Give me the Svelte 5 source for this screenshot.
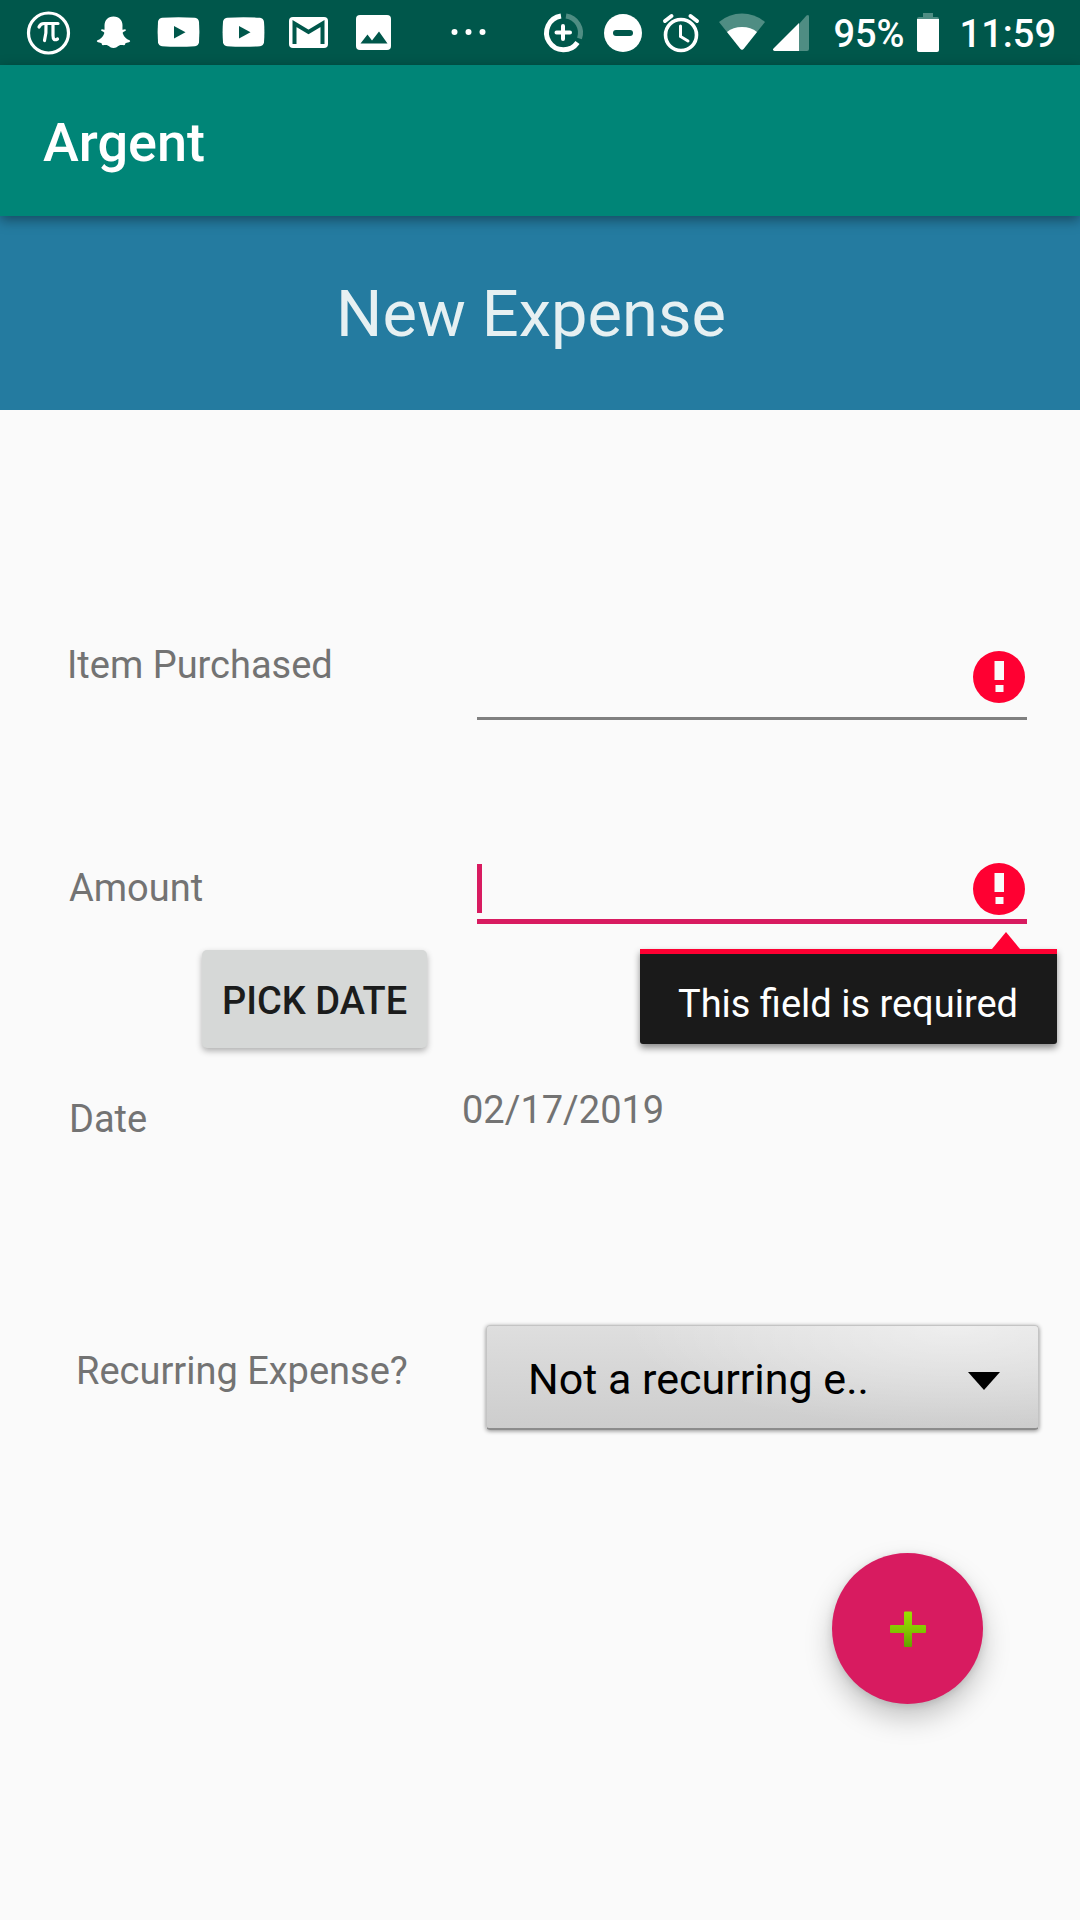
<script>
  let item = $state('');
  let amount = $state('');
  let recurring = $state('none');
</script>

{#snippet errorIcon()}
  <svg class="error-icon" viewBox="0 0 52 52" aria-hidden="true">
    <circle cx="26" cy="26" r="26" fill="#ff0032" />
    <path d="M21.500 10h9.500v19h-9.500zM22.500 34h8v7h-8z" fill="#fafafa" />
  </svg>
{/snippet}

{#snippet youtube()}
  <svg class="slot" viewBox="0 0 65 65" aria-hidden="true">
    <path fill="#fff" d="M16 17.800q16.500-1 33 0 3.500.5 4 4 .8 10.500 0 20.500-.5 3.500-4 4-16.500 1-33 0-3.500-.5-4-4-.8-10 0-20.500.5-3.500 4-4z" />
    <path fill="#00574b" d="M28 26v12.500l11.500-6.300z" />
  </svg>
{/snippet}

<div class="screen">
  <div class="status">
    <div class="notifications">
      <svg class="slot" viewBox="0 0 65 65" aria-hidden="true">
        <circle cx="32.500" cy="33" r="20" fill="none" stroke="#fff" stroke-width="3.200" />
        <path d="M23 27q1.500-3.500 5-3.500h14M30 24.500q.5 9-1.500 16M37 24.500v11q0 6 4.500 3.500" fill="none" stroke="#fff" stroke-width="3.200" stroke-linecap="round" />
      </svg>
      <svg class="slot" viewBox="0 0 65 65" aria-hidden="true">
        <path fill="#fff" d="M32.500 16.500c6 0 9 4 9 9 0 1.500-.1 3 0 4.200 1 .2 2-.6 3-.3.8.5.2 1.500-.8 1.900-1.500.7-2.400 1-1.800 2.500 1.200 3 3.500 5.500 6.600 6.500 1.200.5.700 1.400-.5 1.900-1.500.6-3 .5-3.500 1-.5.700-.2 2-1.500 2-1.500 0-3-.5-4.800.3-1.800 1-3.200 2.600-5.700 2.600s-3.900-1.600-5.700-2.600c-1.800-.8-3.300-.3-4.800-.3-1.300 0-1-1.300-1.500-2-.5-.5-2-.4-3.500-1-1.200-.5-1.700-1.400-.5-1.900 3.100-1 5.400-3.500 6.600-6.500.6-1.500-.3-1.800-1.800-2.500-1-.4-1.600-1.400-.8-1.900 1-.3 2 .5 3 .3.1-1.200 0-2.700 0-4.200 0-5 3-9 9-9z" />
      </svg>
      {@render youtube()}
      {@render youtube()}
      <svg class="slot" viewBox="0 0 65 65" aria-hidden="true">
        <rect x="13" y="17" width="39" height="31" rx="4" fill="#fff" />
        <path d="M18.500 44V23.500L32.500 32l14-8.500V44" fill="none" stroke="#00574b" stroke-width="4" />
      </svg>
      <svg class="slot" viewBox="0 0 65 65" aria-hidden="true">
        <rect x="15" y="15" width="35" height="35" rx="4" fill="#fff" />
        <path fill="#00574b" d="M19.500 43.500l7-9 4.500 6 7-9 8.500 12z" />
      </svg>
      <svg class="slot more" viewBox="0 0 65 65" aria-hidden="true">
        <g fill="#fff"><circle cx="18.500" cy="32" r="3" /><circle cx="32.500" cy="32" r="3" /><circle cx="46.500" cy="32" r="3" /></g>
      </svg>
    </div>
    <div class="system">
      <svg class="sys" viewBox="0 0 60 65" aria-hidden="true">
        <path d="M28 16A17 17 0 1 0 44.500 42.500" fill="none" stroke="#fff" stroke-width="5" />
        <path d="M33 16A17 17 0 0 1 46.500 38.500" fill="none" stroke="#4f8d83" stroke-width="5" />
        <path d="M23.500 32.500h13.500M30 26v13" stroke="#fff" stroke-width="4" stroke-linecap="round" />
      </svg>
      <svg class="sys" viewBox="0 0 60 65" aria-hidden="true">
        <circle cx="30" cy="33" r="19" fill="#fff" />
        <rect x="20" y="30" width="20" height="6" rx="3" fill="#00574b" />
      </svg>
      <svg class="sys" viewBox="0 0 60 65" aria-hidden="true">
        <circle cx="28" cy="35" r="15.500" fill="none" stroke="#fff" stroke-width="3.600" />
        <path d="M12 21l6.500-5M44 21l-6.500-5" stroke="#fff" stroke-width="4" stroke-linecap="round" />
        <path d="M27.500 26v10.500l7.500 4.500" fill="none" stroke="#fff" stroke-width="3" stroke-linecap="round" />
      </svg>
      <svg class="sys" viewBox="0 0 60 65" aria-hidden="true">
        <path d="M6 22Q16 13.500 29 13.500T52 22L30.500 49q-1.500 1.500-3 0z" fill="#4f8d83" />
        <path d="M14 32Q20 27 29 27t15 5L30.500 49q-1.500 1.500-3 0z" fill="#fff" />
      </svg>
      <svg class="sys" viewBox="0 0 60 65" aria-hidden="true">
        <path d="M26 24l7.500-8.500q2.500-1.500 2.500 1V49q0 2-2 2h-8z" fill="#4f8d83" />
        <path d="M26 23v28H1.500q-2.500-.8-1-2.500z" fill="#fff" />
      </svg>
      <span>95%</span>
      <svg class="battery" viewBox="0 0 22 65" aria-hidden="true">
        <path d="M6 13h10v4h4q2 0 2 2H0q0-2 2-2h4z" fill="#4f8d83" />
        <path d="M0 19h22v31q0 2-2 2H2q-2 0-2-2z" fill="#fff" />
      </svg>
      <span>11:59</span>
    </div>
  </div>

  <header class="app-bar">Argent</header>

  <main>
    <h1>New Expense</h1>

    <form onsubmit={(e) => e.preventDefault()}>
      <div class="row item">
        <label for="item">Item Purchased</label>
        <div class="field">
          <input id="item" type="text" bind:value={item} aria-invalid="true" />
          {@render errorIcon()}
        </div>
      </div>

      <div class="row amount">
        <label for="amount">Amount</label>
        <div class="field active">
          <input id="amount" type="text" inputmode="decimal" bind:value={amount} aria-invalid="true" aria-describedby="amount-error" />
          <span class="caret"></span>
          {@render errorIcon()}
          <div class="tooltip" id="amount-error" role="alert">This field is required</div>
        </div>
      </div>

      <button class="pick" type="button">PICK DATE</button>

      <div class="row date">
        <label for="date">Date</label>
        <output id="date">02/17/2019</output>
      </div>

      <div class="row recurring">
        <label for="recurring">Recurring Expense?</label>
        <div class="spinner">
          <select id="recurring" bind:value={recurring}>
            <option value="none">Not a recurring e..</option>
          </select>
          <svg class="arrow" viewBox="0 0 32 18" aria-hidden="true"><path d="M0 0h32L16 18z" /></svg>
        </div>
      </div>

      <button class="fab" type="submit" aria-label="Add expense">
        <svg viewBox="0 0 36 36" aria-hidden="true">
          <defs>
            <linearGradient id="leaf" x1="0" y1="0" x2="0" y2="1">
              <stop offset="0" stop-color="#98e000" />
              <stop offset=".5" stop-color="#84c800" />
              <stop offset="1" stop-color="#64a000" />
            </linearGradient>
          </defs>
          <path d="M15 .5h6q1 0 1 1V14h13q1 0 1 1v6q0 1-1 1H22v13q0 1-1 1h-6q-1 0-1-1V22H1q-1 0-1-1v-6q0-1 1-1h13V1.500q0-1 1-1z" fill="url(#leaf)" />
        </svg>
      </button>
    </form>
  </main>
</div>

<style>
  :global(body) {
    margin: 0;
    background: #fafafa;
  }

  .screen {
    min-height: 100vh;
    background: #fafafa;
    color: #737373;
    font: 400 38px/44px Roboto, sans-serif;
  }

  .status {
    display: flex;
    justify-content: space-between;
    height: 65px;
    padding: 0 24px 0 16px;
    background: #00574b;
    color: #fff;
    font-weight: 500;
    line-height: 68px;
  }

  .notifications,
  .system {
    display: flex;
  }

  .slot {
    width: 65px;
    height: 65px;
  }

  .more {
    margin-left: 30px;
  }

  .sys {
    width: 60px;
    height: 65px;
  }

  .battery {
    width: 22px;
    height: 65px;
    margin: 0 21px 0 12px;
  }

  .app-bar {
    position: relative;
    padding: 46px 43px 41px;
    background: #008577;
    box-shadow: 0 4px 12px rgba(0, 0, 0, 0.4);
    color: #fff;
    font-weight: 500;
    font-size: 54px;
    line-height: 64px;
  }

  h1 {
    margin: 0;
    padding: 60px 18px 58px 0;
    background: #247ba0;
    color: #e6f0f2;
    font-weight: 400;
    font-size: 65px;
    line-height: 76px;
    text-align: center;
  }

  form {
    display: flex;
    flex-direction: column;
    padding: 233px 0 96px;
  }

  .row {
    display: grid;
    grid-template-columns: 410px 1fr;
    padding: 0 53px 0 67px;
  }

  .row.amount {
    align-items: center;
    margin-top: 132px;
    padding-left: 69px;
    grid-template-columns: 408px 1fr;
  }

  .row.date {
    align-items: start;
    margin-top: 40px;
    padding-left: 69px;
    grid-template-columns: 393px 1fr;
  }

  .row.date label {
    padding-top: 9px;
  }

  .row.recurring {
    align-items: start;
    margin-top: 184px;
    padding: 0 41px 0 76px;
    grid-template-columns: 410px 1fr;
  }

  .row.recurring label {
    padding-top: 24px;
  }

  .field {
    position: relative;
    display: flex;
  }

  input {
    box-sizing: border-box;
    width: 100%;
    height: 77px;
    padding: 0 60px 0 0;
    border: 0;
    border-bottom: 3px solid #808080;
    outline: 0;
    background: none;
    color: #1a1a1a;
    font: inherit;
    font-size: 43px;
  }

  .active input {
    height: 72px;
    border-bottom: 5px solid #d81b60;
    caret-color: transparent;
  }

  .caret {
    position: absolute;
    left: 0;
    bottom: 11px;
    width: 5px;
    height: 49px;
    background: #d81b60;
  }

  .error-icon {
    position: absolute;
    right: 2px;
    bottom: 17px;
    width: 52px;
    height: 52px;
  }

  .active .error-icon {
    bottom: 9px;
  }

  .tooltip {
    position: absolute;
    top: 97px;
    right: -30px;
    z-index: 1;
    padding: 28px 39px 18px 38px;
    border-top: 5px solid #ff0032;
    border-radius: 0 0 3px 3px;
    background: #1a1a1a;
    box-shadow: 0 4px 7px rgba(0, 0, 0, 0.45);
    color: #fff;
    white-space: nowrap;
  }

  .tooltip::before {
    content: '';
    position: absolute;
    right: 37px;
    bottom: 100%;
    margin-bottom: 5px;
    border: 14px solid transparent;
    border-top: 0;
    border-bottom: 17px solid #ff0032;
  }

  .pick {
    align-self: flex-start;
    height: 98px;
    margin: 26px 0 0 202px;
    padding: 4px 20px 0;
    border: 0;
    border-radius: 5px;
    background: #d6d8d7;
    box-shadow: 0 3px 6px rgba(0, 0, 0, 0.3);
    color: #1b1c1c;
    font: inherit;
    font-weight: 500;
  }

  .spinner {
    position: relative;
    display: flex;
  }

  select {
    width: 100%;
    height: 105px;
    padding: 4px 100px 0 41px;
    border: 1px solid #c4c4c4;
    border-bottom: 2px solid #8c8c8c;
    border-radius: 4px;
    appearance: none;
    background:
      radial-gradient(ellipse 60% 100% at 85% 0, rgba(255, 255, 255, 0.5), transparent),
      linear-gradient(#dedede, #cdcdcd);
    box-shadow: 0 1px 4px rgba(0, 0, 0, 0.45);
    color: #000;
    font: inherit;
    font-size: 43px;
    line-height: 56px;
  }

  .arrow {
    position: absolute;
    top: 47px;
    right: 39px;
    width: 32px;
    height: 18px;
    pointer-events: none;
  }

  .fab {
    display: flex;
    align-items: center;
    justify-content: center;
    align-self: flex-end;
    width: 151px;
    height: 151px;
    margin: 123px 97px 0 0;
    padding: 0;
    border: 0;
    border-radius: 50%;
    background: #d81b60;
    box-shadow: 0 14px 28px rgba(0, 0, 0, 0.22), 0 2px 8px rgba(0, 0, 0, 0.12);
  }

  .fab svg {
    width: 36px;
    height: 36px;
  }
</style>
